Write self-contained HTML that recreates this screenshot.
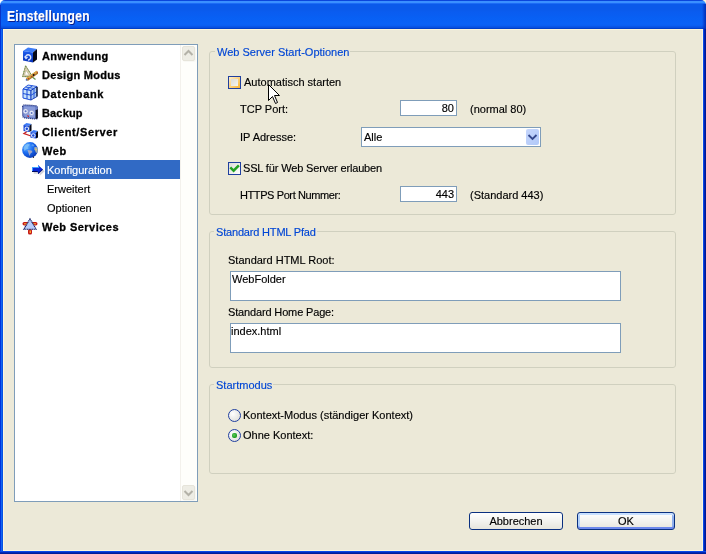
<!DOCTYPE html>
<html><head><meta charset="utf-8"><style>
*{margin:0;padding:0;box-sizing:border-box}
html,body{width:706px;height:554px;overflow:hidden}
body{position:relative;background:#ECE9D8;font-family:"Liberation Sans",sans-serif;font-size:11px;line-height:13px;color:#000;-webkit-text-stroke:0.15px currentColor}
.a{position:absolute;white-space:nowrap}
.b{font-weight:bold;letter-spacing:0.3px;-webkit-text-stroke:0.3px #000}
.gb{position:absolute;border:1px solid #D0D0BF;border-radius:3px}
.gt{position:absolute;color:#0046D5;background:#ECE9D8;padding:0 1px 0 2px}
.tb{position:absolute;background:#fff;border:1px solid #7F9DB9}
.cb{position:absolute;width:13px;height:13px;border:1px solid #1F3F9F;background:linear-gradient(135deg,#DCDCD7 0%,#FFFFFF 100%)}
.rb{position:absolute;width:13px;height:13px;border:1px solid #1F3F9F;border-radius:50%;background:radial-gradient(circle at 35% 35%,#FFFFFF 0%,#DCDCD7 90%)}
.btn{position:absolute;height:18px;border:1px solid #0A3080;border-radius:3px;background:linear-gradient(#FFFFFF 0%,#F3F3EF 50%,#E6E5DD 100%);text-align:center;line-height:13px}
.row{position:absolute;left:0}
</style></head><body><div id="w" style="position:absolute;left:0;top:0;width:706px;height:554px;will-change:transform">

<!-- window frame -->
<div class="a" style="left:0;top:0;width:6px;height:6px;background:#FFFFFF"></div>
<div class="a" style="left:700px;top:0;width:6px;height:6px;background:#FDF6DC"></div>
<div class="a" style="left:0;top:0;width:706px;height:29px;border-radius:5px 5px 0 0;background:linear-gradient(#0A46DC 0px,#0A46DC 1px,#3A90FF 1px,#3A90FF 3px,#1C6CF6 3px,#1C6CF6 4px,#0A5AEA 4px,#0A5AEA 9px,#0A5CF0 12px,#0860F4 18px,#0A62F6 24px,#0A5EF0 26px,#0850E0 27px,#0850E0 28px,#0040C8 28px,#0040C8 29px)"></div>
<div class="a" style="left:0;top:29px;width:3px;height:525px;background:linear-gradient(90deg,#0032DC 0,#0032DC 1px,#1266F2 1px,#1266F2 2px,#0852E2 2px)"></div>
<div class="a" style="left:703px;top:29px;width:3px;height:525px;background:linear-gradient(90deg,#0A4AE6 0,#0A4AE6 1px,#0024B6 1px,#0024B6 2px,#001A96 2px)"></div>
<div class="a" style="left:0;top:551px;width:706px;height:3px;background:linear-gradient(#0A48E8 0,#0A48E8 1px,#0028B8 1px,#0028B8 2px,#001C98 2px)"></div>
<div class="a" style="left:3px;top:29px;width:700px;height:522px;border:1px solid #FDF6DC;border-top-color:#FFF6D8"></div>
<div class="a" style="left:0;top:5px;width:1px;height:24px;background:#0834C8"></div>
<div class="a" style="left:702px;top:4px;width:4px;height:25px;background:linear-gradient(90deg,rgba(0,40,180,0) 0,rgba(0,40,180,0.5) 2px,#0030B8 4px)"></div>
<div class="a b" style="left:7px;top:9px;font-size:14px;line-height:15px;color:#fff;-webkit-text-stroke:0.2px #fff;text-shadow:1px 1px 0 #0A1E8C;letter-spacing:0.35px;transform:scaleX(0.86);transform-origin:0 0">Einstellungen</div>

<!-- tree -->
<div class="a" style="left:14px;top:44px;width:184px;height:458px;border:1px solid #7F9DB9;background:#fff"></div>
<!-- scrollbar -->
<div class="a" style="left:180px;top:45px;width:17px;height:456px;background:#FEFEFB;border-left:1px solid #F3F1EC"></div>
<div class="a" style="left:182px;top:46px;width:13px;height:15px;border-radius:2px;background:#EEEDE5;border:1px solid #E6E4DA;box-shadow:1px 1px 0 #F8F8F4"></div>
<div class="a" style="left:182px;top:485px;width:13px;height:15px;border-radius:2px;background:#EEEDE5;border:1px solid #E6E4DA;box-shadow:1px 1px 0 #F8F8F4"></div>
<svg class="a" style="left:180px;top:45px" width="17" height="456">
 <path d="M4.5 10 L8.5 6 L12.5 10" fill="none" stroke="#B4B2A8" stroke-width="2"/>
 <path d="M4.5 446 L8.5 450 L12.5 446" fill="none" stroke="#B4B2A8" stroke-width="2"/>
</svg>


<!-- tree icons -->
<svg class="a" style="left:22px;top:47px" width="16" height="16" viewBox="0 0 16 16">
 <defs><linearGradient id="cf" x1="0" y1="0" x2="0" y2="1"><stop offset="0" stop-color="#1E5EF0"/><stop offset="1" stop-color="#0832B8"/></linearGradient></defs>
 <polygon points="1,4 6,0.5 15,2 11,5.5" fill="#3C7CF8"/>
 <polygon points="1,4 11,5.5 11,15.5 1,13.5" fill="url(#cf)"/>
 <polygon points="11,5.5 15,2 15,12.5 11,15.5" fill="#050818"/>
 <path d="M3.5 10.5 A2.6 2.6 0 1 1 6 13" fill="none" stroke="#DCE6FF" stroke-width="1.4"/>
 <path d="M2.5 9.5 L4 11.5 L5.5 10" fill="none" stroke="#DCE6FF" stroke-width="1.2"/>
</svg>
<svg class="a" style="left:22px;top:64px" width="16" height="18" viewBox="0 0 16 18">
 <polygon points="3.6,1.8 0.6,12.6 10.5,12.6" fill="#DCD4B4" stroke="#9C9068" stroke-width="0.9"/>
 <polygon points="3.9,6.2 2.6,11.2 7.4,11.2" fill="#FFFFFF" stroke="#B8AC88" stroke-width="0.6"/>
 <polygon points="3.6,1.8 0.6,12.6 10.5,12.6" fill="none" stroke="#5C9A48" stroke-width="1" stroke-dasharray="0.9 1.8"/>
 <line x1="9" y1="12" x2="13.5" y2="15.5" stroke="#6A9450" stroke-width="1.2"/>
 <line x1="15.6" y1="8" x2="4.8" y2="15.6" stroke="#A87828" stroke-width="3.2"/>
 <line x1="15.2" y1="7.6" x2="4.6" y2="15.1" stroke="#DCAC48" stroke-width="1.8"/>
 <line x1="15.6" y1="8" x2="4.8" y2="15.6" stroke="#B02828" stroke-width="1.1" stroke-dasharray="1 2.6"/>
 <circle cx="11.5" cy="11" r="0.9" fill="#101010"/>
 <circle cx="4.6" cy="15.8" r="0.9" fill="#4060C0"/>
</svg>
<svg class="a" style="left:22px;top:83px" width="16" height="18" viewBox="0 0 16 18">
 <polygon points="1,6 6,2 15,3.5 9,7.5" fill="#C4DCF8" stroke="#1A4CD8" stroke-width="0.9"/>
 <polygon points="1,6 9,7.5 9,17 1,15" fill="#C8E2FA" stroke="#1A4CD8" stroke-width="1"/>
 <polygon points="9,7.5 15,3.5 15,13.5 9,17" fill="#A8C8F0" stroke="#1236B0" stroke-width="0.9"/>
 <line x1="5" y1="6.8" x2="5" y2="16" stroke="#1A4CD8" stroke-width="1"/>
 <line x1="1" y1="10.5" x2="9" y2="12.2" stroke="#1A4CD8" stroke-width="1"/>
 <line x1="12" y1="5.5" x2="12" y2="15.3" stroke="#1A4CD8" stroke-width="0.9"/>
 <line x1="9" y1="12.3" x2="15" y2="8.5" stroke="#1A4CD8" stroke-width="0.9"/>
 <line x1="3.5" y1="4" x2="12" y2="5.5" stroke="#1A4CD8" stroke-width="0.9"/>
 <line x1="10.5" y1="2.8" x2="4" y2="7" stroke="#1A4CD8" stroke-width="0.9"/>
 <line x1="15" y1="4" x2="15" y2="13.5" stroke="#101828" stroke-width="1.2"/>
</svg>
<svg class="a" style="left:22px;top:102px" width="16" height="18" viewBox="0 0 16 18">
 <path d="M0.6 5 Q0.6 2.8 3 2.9 L13 3.6 Q15.6 3.9 15.6 6.2 L15.6 15 Q15.6 17.2 13.3 17 L2.8 15.9 Q0.6 15.7 0.6 13.6 Z" fill="#6E84CC" stroke="#22307A" stroke-width="1.2" stroke-dasharray="1.1 0.9"/>
 <path d="M2 4.5 L13 5.2 L13 15.5 L2.5 14.6 Z" fill="#8A9CDA"/>
 <path d="M13.6 8 L15.8 7.5 L15.8 16.4 L13.6 17 Z" fill="#0C0C18"/>
 <circle cx="3.6" cy="9.3" r="2.6" fill="#E6EAF8" stroke="#7080C0" stroke-width="0.5"/>
 <circle cx="9.6" cy="10.9" r="2.6" fill="#E6EAF8" stroke="#7080C0" stroke-width="0.5"/>
 <circle cx="3.6" cy="9.3" r="1" fill="#5A70C0"/>
 <circle cx="9.6" cy="10.9" r="1" fill="#5A70C0"/>
 <path d="M5 13.2 L7 13.8 L7 15 L5.5 14.6 Z" fill="#D01818"/>
</svg>
<svg class="a" style="left:22px;top:121px" width="16" height="18" viewBox="0 0 16 18">
 <polyline points="5,10.5 2,12.5 9,15" fill="none" stroke="#C82020" stroke-width="1.3"/>
 <polygon points="1.5,4 4.5,2 9.5,3 7.5,4.8" fill="#3C7CF8"/>
 <polygon points="1.5,4 7.5,4.8 7.5,11 1.5,10" fill="#1448D8"/>
 <polygon points="7.5,4.8 9.5,3 9.5,9.8 7.5,11" fill="#050818"/>
 <circle cx="4.8" cy="7.8" r="1.8" fill="none" stroke="#DCE6FF" stroke-width="1.1"/>
 <polygon points="8.5,11 11.5,9 16,10 14,11.8" fill="#3C7CF8"/>
 <polygon points="8.5,11 14,11.8 14,17.5 8.5,16.8" fill="#1448D8"/>
 <polygon points="14,11.8 16,10 16,16.5 14,17.5" fill="#050818"/>
 <circle cx="11.3" cy="14.5" r="1.8" fill="none" stroke="#DCE6FF" stroke-width="1.1"/>
</svg>
<svg class="a" style="left:22px;top:142px" width="16" height="16" viewBox="0 0 16 16">
 <defs><radialGradient id="gl" cx="0.3" cy="0.3" r="0.8"><stop offset="0" stop-color="#62B4FF"/><stop offset="0.5" stop-color="#1A6AF0"/><stop offset="1" stop-color="#0A36B0"/></radialGradient></defs>
 <circle cx="8" cy="8" r="7.9" fill="url(#gl)"/>
 <path d="M1.5 6 L3 3.2 L5.5 1.8 L8 2.5 L7 4 L5.5 5 L6.5 6.5 L4 7.5 L2.5 9 Z" fill="#86C4F8" opacity="0.75"/>
 <path d="M10 2 L12.5 3 L11.5 4.5 L9.5 4 Z" fill="#7AB8F4" opacity="0.6"/>
 <path d="M5.5 8 L9.5 8.5 L10.5 10 L8.5 11.5 L7.5 14 L6.5 11 Z" fill="#A0A8C8"/>
 <path d="M12.5 5 L15.3 5.2 L15.8 8 L15.2 11 L13.8 10.5 L13.2 8.8 L12.2 7.5 Z" fill="#A8B0A8"/>
 <rect x="13.5" y="7" width="1.5" height="1.2" fill="#E8C870"/>
 <circle cx="11.5" cy="15.2" r="0.6" fill="#000"/>
</svg>
<svg class="a" style="left:30px;top:163px" width="15" height="14" viewBox="0 0 15 14">
 <polygon points="3,5 9,5 9,3 14,7.5 9,12 9,10 3,10" fill="#1C1C40" opacity="0.2" transform="translate(0.7,0.7)"/>
 <polygon points="2,4 8,4 8,2 13,6.5 8,11 8,9 2,9" fill="#0A28D8"/>
 <polygon points="2,4 8,4 8,2 9,3 9,5 3,5 3,8 2,9" fill="#40A0FF"/>
 <polygon points="2,9 8,9 8,11 13,6.5 12,6.5 8,10 7.5,8 2,8" fill="#000A60"/>
</svg>
<svg class="a" style="left:22px;top:216px" width="16" height="19" viewBox="0 0 16 19">
 <rect x="0.5" y="6" width="15" height="3.5" rx="1.7" fill="#C41818"/>
 <rect x="2" y="7.2" width="12" height="1.2" fill="#F8A030"/>
 <rect x="6" y="13" width="4" height="5.5" rx="1.5" fill="#C41818"/>
 <rect x="7.5" y="14.5" width="1.5" height="2.5" fill="#F8A030"/>
 <polygon points="8,2.8 1.8,13.3 14.2,13.3" fill="#B8CCFA" stroke="#141E60" stroke-width="1.1" stroke-dasharray="1.2 0.5"/>
</svg>

<!-- highlight -->
<div class="a" style="left:45px;top:160px;width:135px;height:19px;background:#316AC5"></div>

<div class="a b" style="left:42px;top:50px;letter-spacing:0.42px">Anwendung</div>
<div class="a b" style="left:42px;top:69px">Design Modus</div>
<div class="a b" style="left:42px;top:88px;letter-spacing:0.65px">Datenbank</div>
<div class="a b" style="left:42px;top:107px;letter-spacing:0.15px">Backup</div>
<div class="a b" style="left:42px;top:126px;letter-spacing:0.62px">Client/Server</div>
<div class="a b" style="left:42px;top:145px;letter-spacing:0.6px">Web</div>
<div class="a" style="left:47px;top:164px;color:#fff">Konfiguration</div>
<div class="a" style="left:47px;top:183px">Erweitert</div>
<div class="a" style="left:47px;top:202px">Optionen</div>
<div class="a b" style="left:42px;top:221px;letter-spacing:0.47px">Web Services</div>

<!-- group 1 -->
<div class="gb" style="left:209px;top:51px;width:467px;height:164px"></div>
<div class="gt" style="left:215px;top:46px">Web Server Start-Optionen</div>
<div class="cb" style="left:228px;top:76px;background:linear-gradient(135deg,#FFF0CF,#F8B330)"></div>
<div class="a" style="left:231px;top:79px;width:7px;height:7px;background:linear-gradient(135deg,#DCDCD7,#F4F4F0)"></div>
<div class="a" style="left:244px;top:76px">Automatisch starten</div>
<div class="a" style="left:240px;top:103px">TCP Port:</div>
<div class="tb" style="left:400px;top:100px;width:57px;height:16px"></div>
<div class="a" style="left:400px;top:102px;width:54px;text-align:right">80</div>
<div class="a" style="left:470px;top:103px">(normal 80)</div>
<div class="a" style="left:240px;top:131px">IP Adresse:</div>
<div class="tb" style="left:361px;top:127px;width:180px;height:20px"></div>
<div class="a" style="left:364px;top:131px">Alle</div>
<div class="a" style="left:526px;top:129px;width:13px;height:16px;border-radius:2px;background:linear-gradient(135deg,#C6D6FC,#B1C9F8)"></div>
<svg class="a" style="left:526px;top:129px" width="13" height="16"><path d="M2.5 6 L6.5 10 L10.5 6" fill="none" stroke="#34488C" stroke-width="1.8"/></svg>
<div class="cb" style="left:228px;top:162px"></div>
<svg class="a" style="left:228px;top:162px" width="13" height="13"><path d="M3.2 6.3 L5.6 8.7 L10 4.2" fill="none" stroke="#21A121" stroke-width="2.5" stroke-linecap="square"/></svg>
<div class="a" style="left:243px;top:162px;letter-spacing:-0.15px">SSL für Web Server erlauben</div>
<div class="a" style="left:240px;top:189px;letter-spacing:-0.4px">HTTPS Port Nummer:</div>
<div class="tb" style="left:400px;top:186px;width:57px;height:16px"></div>
<div class="a" style="left:400px;top:188px;width:54px;text-align:right">443</div>
<div class="a" style="left:470px;top:189px">(Standard 443)</div>

<!-- group 2 -->
<div class="gb" style="left:209px;top:231px;width:467px;height:137px"></div>
<div class="gt" style="left:214px;top:226px;letter-spacing:-0.18px">Standard HTML Pfad</div>
<div class="a" style="left:228px;top:254px">Standard HTML Root:</div>
<div class="tb" style="left:230px;top:271px;width:391px;height:30px"></div>
<div class="a" style="left:232px;top:273px">WebFolder</div>
<div class="a" style="left:228px;top:306px;letter-spacing:-0.15px">Standard Home Page:</div>
<div class="tb" style="left:230px;top:323px;width:391px;height:30px"></div>
<div class="a" style="left:231px;top:325px">index.html</div>

<!-- group 3 -->
<div class="gb" style="left:209px;top:384px;width:467px;height:90px"></div>
<div class="gt" style="left:214px;top:379px">Startmodus</div>
<div class="rb" style="left:228px;top:409px"></div>
<div class="a" style="left:243px;top:409px">Kontext-Modus (ständiger Kontext)</div>
<div class="rb" style="left:228px;top:429px"></div>
<div class="a" style="left:232px;top:433px;width:5px;height:5px;background:radial-gradient(circle at 40% 40%,#5CC85C 0,#21A121 60%,#1A8A1A 100%);border-radius:2px"></div>
<div class="a" style="left:243px;top:429px">Ohne Kontext:</div>

<!-- buttons -->
<div class="btn" style="left:469px;top:512px;width:94px;padding-top:2px">Abbrechen</div>
<div class="btn" style="left:577px;top:512px;width:98px;padding-top:2px;box-shadow:inset 0 -2px 0 #6C88EC,inset 0 2px 0 #C8E0FF,inset 2px 0 0 #B4D2FA,inset -2px 0 0 #90B0EC">OK</div>


<!-- cursor -->
<svg class="a" style="left:267px;top:83px" width="14" height="22" viewBox="0 0 14 22">
 <path d="M1.5 1.5 L1.5 17.5 L5.5 13.5 L8.5 20.5 L10.5 19.5 L7.5 12.5 L12.5 12.5 Z" fill="#fff" stroke="#000" stroke-width="1" stroke-linejoin="miter"/>
</svg>
</div></body></html>
